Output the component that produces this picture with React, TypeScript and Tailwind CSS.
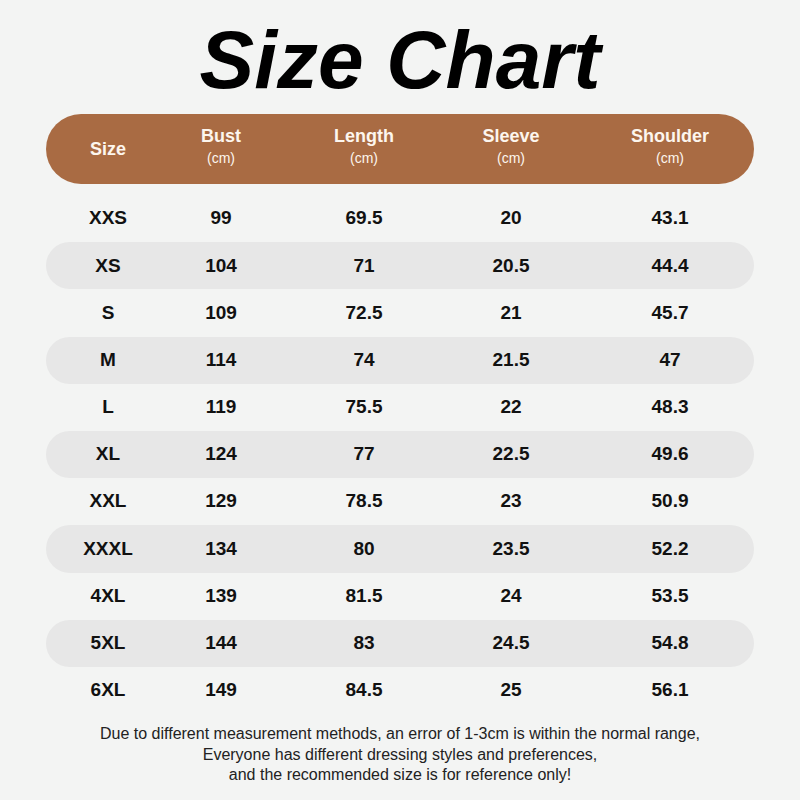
const rows = [
  ["XXS", "99", "69.5", "20", "43.1"],
  ["XS", "104", "71", "20.5", "44.4"],
  ["S", "109", "72.5", "21", "45.7"],
  ["M", "114", "74", "21.5", "47"],
  ["L", "119", "75.5", "22", "48.3"],
  ["XL", "124", "77", "22.5", "49.6"],
  ["XXL", "129", "78.5", "23", "50.9"],
  ["XXXL", "134", "80", "23.5", "52.2"],
  ["4XL", "139", "81.5", "24", "53.5"],
  ["5XL", "144", "83", "24.5", "54.8"],
  ["6XL", "149", "84.5", "25", "56.1"],
];

const cols = "grid grid-cols-[124px_102px_184px_130px_168px] items-center justify-items-center";

function App() {
  return (
    <main className="w-[800px] h-[800px] bg-[#f3f4f3] font-['Liberation_Sans',Arial,sans-serif] text-[#111]">
      <h1 className="pt-[19px] text-center text-[82px] leading-none font-bold italic text-black">
        Size Chart
      </h1>

      <div className="mx-[46px] mt-[13px]">
        {/* header bar */}
        <div className={`${cols} h-[70px] rounded-full bg-[#a96b43] text-[#fdf6ee]`}>
          <div className="text-[18px] font-bold">Size</div>
          {["Bust", "Length", "Sleeve", "Shoulder"].map((h, i) => (
            <div key={h} className={`flex flex-col items-center pb-[4px] ${i === 2 ? "pr-5" : ""}`}>
              <span className="text-[18px] font-bold leading-[22px]">{h}</span>
              <span className="text-[14px] leading-[22px]">(cm)</span>
            </div>
          ))}
        </div>

        {/* rows */}
        <div className="mt-[11px]">
          {rows.map((r, i) => (
            <div
              key={r[0]}
              className={`${cols} h-[47.2px] rounded-full text-[19px] font-bold ${i % 2 === 1 ? "bg-[#e7e7e7]" : ""}`}
            >
              {r.map((c, j) => (
                <div key={j} className={j === 3 ? "pr-5" : ""}>
                  {c}
                </div>
              ))}
            </div>
          ))}
        </div>
      </div>

      <p className="mt-[10px] text-center text-[16px] leading-[20.5px] text-[#222]">
        Due to different measurement methods, an error of 1-3cm is within the normal range,
        <br />
        Everyone has different dressing styles and preferences,
        <br />
        and the recommended size is for reference only!
      </p>
    </main>
  );
}

export default App;
